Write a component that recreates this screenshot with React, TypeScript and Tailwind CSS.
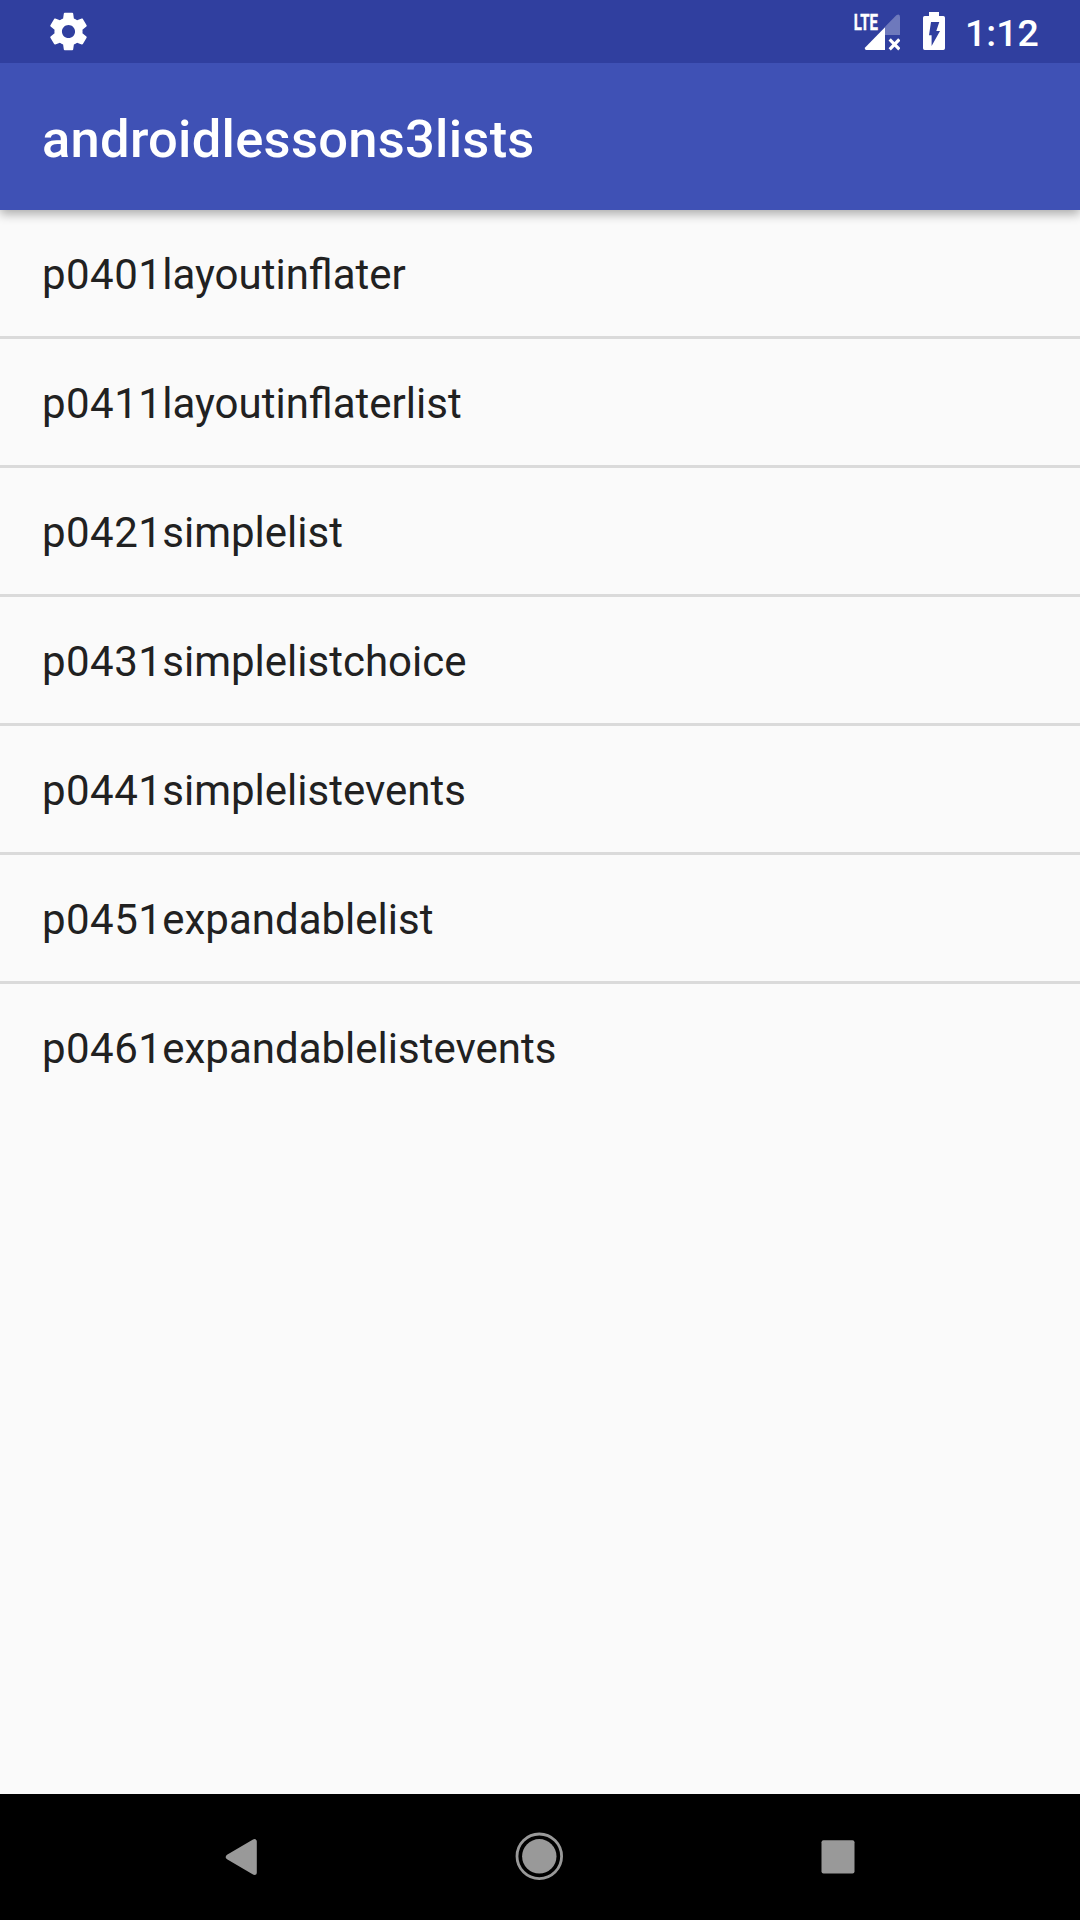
const lessons = [
  { code: "p0401", title: "layoutinflater" },
  { code: "p0411", title: "layoutinflaterlist" },
  { code: "p0421", title: "simplelist" },
  { code: "p0431", title: "simplelistchoice" },
  { code: "p0441", title: "simplelistevents" },
  { code: "p0451", title: "expandablelist" },
  { code: "p0461", title: "expandablelistevents" },
];

function GearIcon() {
  return (
    <svg className="h-[45px] w-[45px]" viewBox="0 0 24 24" fill="#fff">
      <path d="M19.43 12.98c.04-.32.07-.64.07-.98s-.03-.66-.07-.98l2.11-1.65c.19-.15.24-.42.12-.64l-2-3.46c-.12-.22-.39-.3-.61-.22l-2.49 1c-.52-.4-1.08-.73-1.69-.98l-.38-2.65C14.46 2.18 14.25 2 14 2h-4c-.25 0-.46.18-.49.42l-.38 2.65c-.61.25-1.17.59-1.69.98l-2.49-1c-.23-.09-.49 0-.61.22l-2 3.46c-.13.22-.07.49.12.64l2.11 1.65c-.04.32-.07.65-.07.98s.03.66.07.98l-2.11 1.65c-.19.15-.24.42-.12.64l2 3.46c.12.22.39.3.61.22l2.49-1c.52.4 1.08.73 1.69.98l.38 2.65c.03.24.24.42.49.42h4c.25 0 .46-.18.49-.42l.38-2.65c.61-.25 1.17-.59 1.69-.98l2.49 1c.23.09.49 0 .61-.22l2-3.46c.12-.22.07-.49-.12-.64l-2.11-1.65zM12 15.5c-1.93 0-3.5-1.57-3.5-3.5s1.57-3.5 3.5-3.5 3.5 1.57 3.5 3.5-1.57 3.5-3.5 3.5z" />
    </svg>
  );
}

function SignalIcon() {
  return (
    <svg className="h-[63px] w-[48px]" viewBox="0 0 48 63">
      <path d="M33 26.8 L44.3 15.3 Q48 13 48 17 V35 H33 Z" fill="#fff" fillOpacity=".3" />
      <path d="M33 27.3 V50 H14.2 Q11.8 49.2 13.4 47.2 Z" fill="#fff" />
      <path d="M38.8 40.6 L46.2 48.2 M46.2 40.6 L38.8 48.2" stroke="#fff" strokeWidth="3.2" strokeLinecap="square" />
      <text x="1.8" y="29.7" textLength="24.2" lengthAdjust="spacingAndGlyphs" fill="#fff" stroke="#fff" strokeWidth=".4" fontFamily="Roboto, sans-serif" fontWeight="700" fontSize="22.5">
        LTE
      </text>
    </svg>
  );
}

function BatteryIcon() {
  return (
    <svg className="h-[63px] w-[22px]" viewBox="0 0 22 63">
      <path
        fill="#fff"
        fillRule="evenodd"
        d="M6 12 H16 V16 H20.3 Q22 16 22 17.7 V48.3 Q22 50 20.3 50 H1.7 Q0 50 0 48.3 V17.7 Q0 16 1.7 16 H6 Z M8 22 H16.3 L13.3 31 H17 L8.6 46 V35.3 H6 Z"
      />
    </svg>
  );
}

export default function App() {
  return (
    <div className="flex h-[1920px] w-[1080px] flex-col overflow-hidden bg-[#fafafa] font-[Roboto,sans-serif]">
      <div className="z-20 flex h-[63px] shrink-0 items-center bg-[#303f9f] pr-[42px] pl-[46px]">
        <GearIcon />
        <div className="ml-auto flex items-center">
          <SignalIcon />
          <div className="ml-[23px]">
            <BatteryIcon />
          </div>
          <span className="ml-[20px] w-[73px] pt-[4px] text-[37.5px] leading-none font-medium whitespace-nowrap text-white">1:12</span>
        </div>
      </div>
      <header className="z-10 flex h-[147px] shrink-0 items-center bg-[#3f51b5] px-[42px] pt-[5px] shadow-[0_4px_10px_rgba(0,0,0,0.32)]">
        <h1 className="text-[52.5px] leading-[62px] font-medium tracking-[0.26px] text-white">androidlessons3lists</h1>
      </header>
      <ul className="flex grow flex-col">
        {lessons.map(({ code, title }) => (
          <li
            key={code}
            className="flex h-[129px] items-center border-b-3 border-[#dadada] px-[42px] pt-[4px] text-[42px] leading-[50px] text-[#212121] last:border-transparent"
          >
            <span className="tracking-[0.45px]">{code}</span>
            {title}
          </li>
        ))}
      </ul>
      <nav className="flex h-[126px] shrink-0 items-center justify-center gap-[230px] bg-black">
        <svg className="h-[68px] w-[68px]" viewBox="0 0 68 68" fill="#999">
          <path d="M46.3 18.6 V49.4 L20.3 34 Z" stroke="#999" strokeWidth="5" strokeLinejoin="round" />
        </svg>
        <svg className="h-[68px] w-[68px]" viewBox="0 0 68 68">
          <circle cx="33.3" cy="33.3" r="17.2" fill="#999" />
          <circle cx="33.3" cy="33.3" r="22.3" fill="none" stroke="#999" strokeWidth="2.8" />
        </svg>
        <svg className="h-[68px] w-[68px]" viewBox="0 0 68 68" fill="#999">
          <rect x="17.5" y="17.3" width="33" height="33.2" rx="2" />
        </svg>
      </nav>
    </div>
  );
}
